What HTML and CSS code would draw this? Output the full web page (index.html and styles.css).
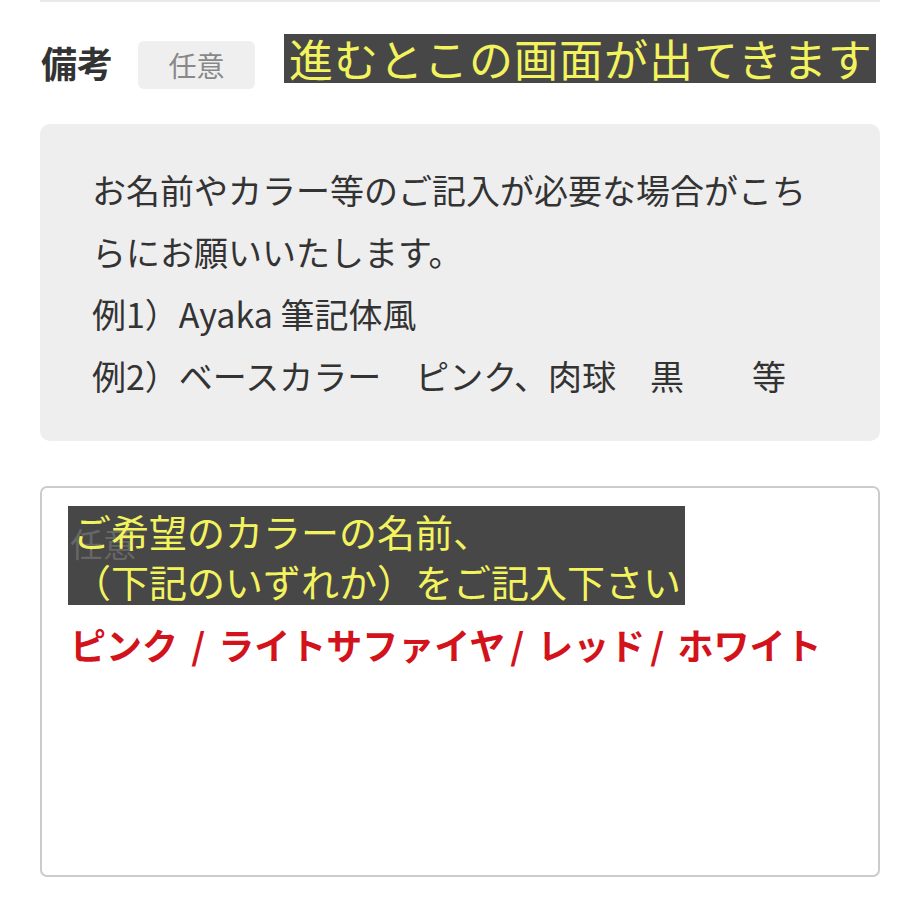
FILE: index.html
```html
<!DOCTYPE html>
<html lang="ja">
<head>
<meta charset="utf-8">
<link rel="stylesheet" href="styles.css">
</head>
<body>
<div class="page">
  <div class="rule"></div>
  <div class="header">
    <div class="title">備考</div>
    <div class="badge">任意</div>
    <div class="banner">進むとこの画面が出てきます</div>
  </div>
  <div class="note">
    <p class="line">お名前やカラー等のご記入が必要な場合がこち</p>
    <p class="line">らにお願いいたします。</p>
    <p class="line">例1）Ayaka 筆記体風</p>
    <p class="line">例2）ベースカラー　ピンク、肉球　黒　　等</p>
  </div>
  <div class="field">
    <div class="overlay-bg"></div>
    <span class="placeholder">任意</span>
    <div class="overlay-text">ご希望のカラーの名前、<br>（下記のいずれか）をご記入下さい</div>
    <div class="colors">ピンク <span class="sep">/</span> ライトサファイヤ<span class="sep">/</span> レッド<span class="sep">/</span> ホワイト</div>
  </div>
</div>
</body>
</html>
```
FILE: styles.css
```css
html, body {
  margin: 0;
  padding: 0;
  background: #ffffff;
}
body {
  font-family: "Noto Sans CJK JP", "Noto Sans", sans-serif;
  color: #333333;
}
.page {
  width: 840px;
  padding: 0 40px;
}
.rule {
  height: 2px;
  background: #e9e9e9;
}
.header {
  display: flex;
  align-items: flex-start;
  margin-top: 32px;
}
.title {
  font-size: 36px;
  font-weight: 700;
  line-height: 50px;
  margin-top: 3px;
  margin-left: 1px;
  color: #333333;
}
.badge {
  margin-left: 25px;
  margin-top: 7px;
  width: 117px;
  height: 48px;
  border-radius: 6px;
  background: #efefef;
  color: #888888;
  font-size: 28px;
  line-height: 48px;
  text-align: center;
}
.banner {
  margin-left: 29px;
  width: 592px;
  height: 49px;
  background: #474747;
  color: #f3f35e;
  font-size: 44px;
  letter-spacing: 1px;
  line-height: 49px;
  padding-left: 5px;
  box-sizing: border-box;
  white-space: nowrap;
}
.note {
  margin-top: 35px;
  background: #eeeeee;
  border-radius: 10px;
  padding: 35px 40px 34px 52px;
}
.line {
  margin: 0;
  font-size: 34px;
  line-height: 62px;
  color: #333333;
  white-space: nowrap;
}
.field {
  position: relative;
  margin-top: 45px;
  height: 391px;
  box-sizing: border-box;
  border: 2px solid #cccccc;
  border-radius: 7px;
  padding: 33px 28px 0;
}
.placeholder {
  position: relative;
  z-index: 2;
  font-size: 33px;
  line-height: 44px;
  color: #666666;
}
.overlay-bg {
  position: absolute;
  left: 26px;
  top: 18px;
  width: 617px;
  height: 99px;
  background: #474747;
}
.overlay-text {
  position: absolute;
  z-index: 3;
  left: 31px;
  top: 18px;
  font-size: 38px;
  line-height: 49.5px;
  color: #f3f35e;
  white-space: nowrap;
}
.colors {
  position: absolute;
  left: 28px;
  top: 134px;
  font-size: 36px;
  line-height: 44px;
  font-weight: 700;
  color: #d3131b;
  white-space: nowrap;
}
.sep {
  padding: 0 5px;
}
```
